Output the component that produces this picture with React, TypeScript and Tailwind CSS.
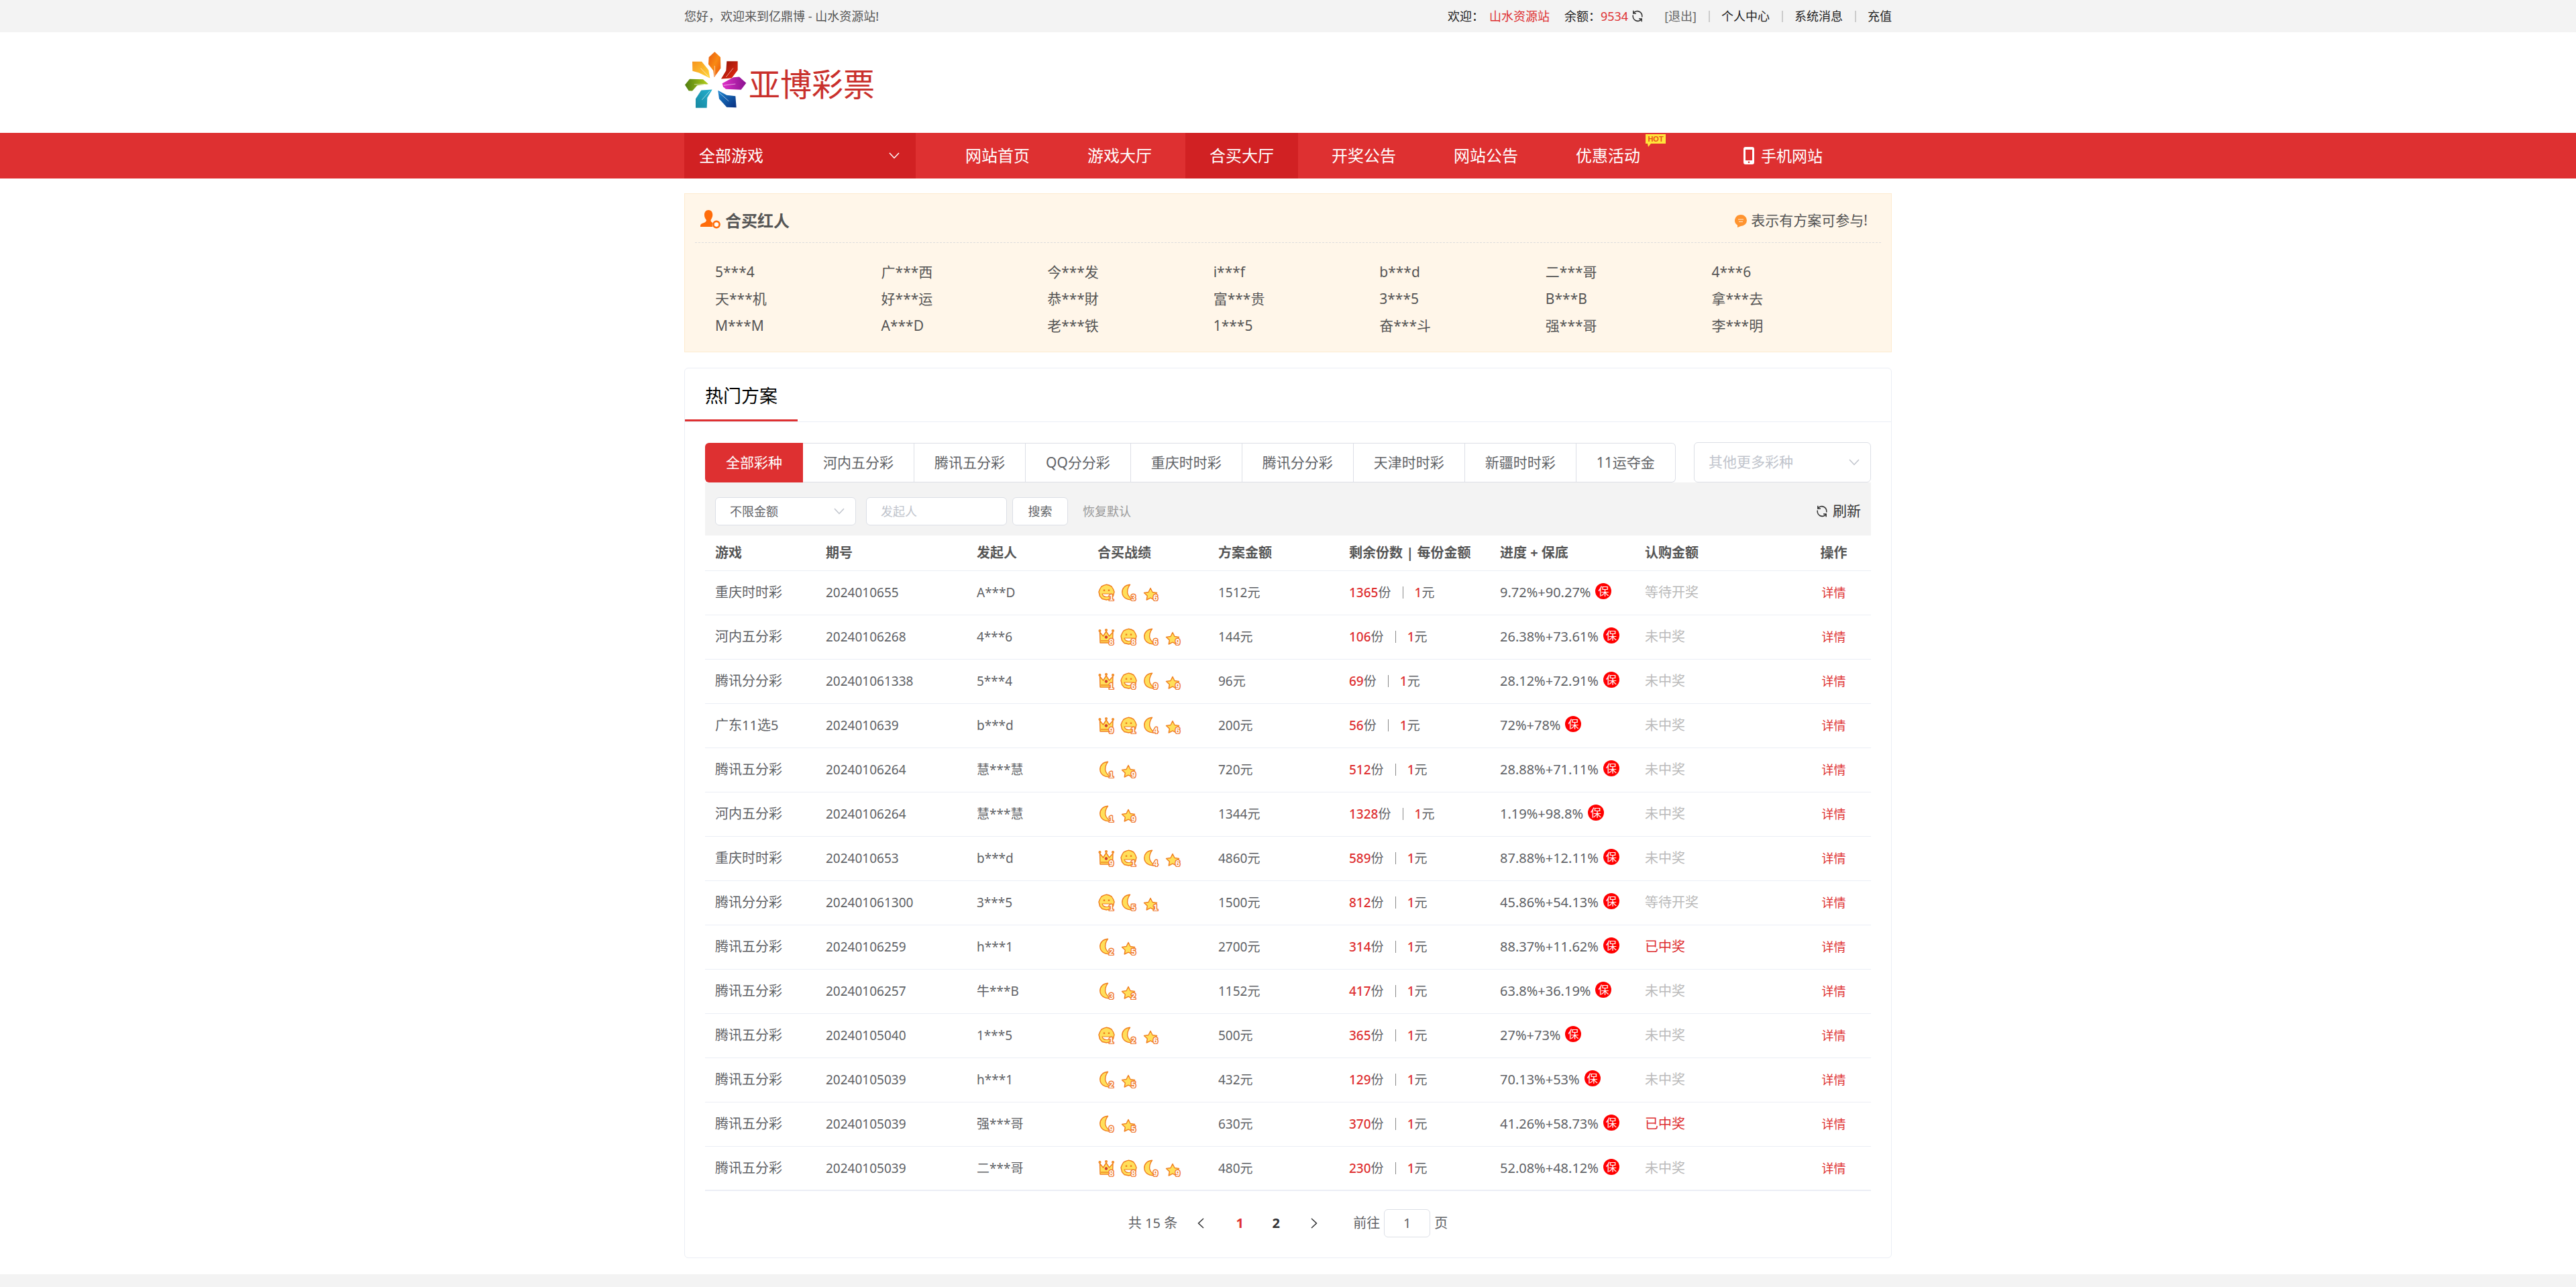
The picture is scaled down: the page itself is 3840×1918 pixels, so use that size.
import type { ReactNode } from 'react';

type MedalKind = 'crown' | 'smile' | 'moon' | 'star';
type Medal = [MedalKind, number];

interface Plan {
  game: string;
  issue: string;
  owner: string;
  medals: Medal[];
  amount: string;
  left: number;
  progress: string;
  status: string;
}

const NAV_ITEMS = ['网站首页', '游戏大厅', '合买大厅', '开奖公告', '网站公告', '优惠活动'];
const ACTIVE_NAV = '合买大厅';
const HOT_NAV = '优惠活动';

const STARS = [
  '5***4', '广***西', '今***发', 'i***f', 'b***d', '二***哥', '4***6',
  '天***机', '好***运', '恭***財', '富***贵', '3***5', 'B***B', '拿***去',
  'M***M', 'A***D', '老***铁', '1***5', '奋***斗', '强***哥', '李***明',
];

const LOTTERIES = [
  '全部彩种', '河内五分彩', '腾讯五分彩', 'QQ分分彩', '重庆时时彩',
  '腾讯分分彩', '天津时时彩', '新疆时时彩', '11运夺金',
];

const PLANS: Plan[] = [
  { game: '重庆时时彩', issue: '2024010655', owner: 'A***D', medals: [['smile', 1], ['moon', 3], ['star', 6]], amount: '1512元', left: 1365, progress: '9.72%+90.27%', status: '等待开奖' },
  { game: '河内五分彩', issue: '20240106268', owner: '4***6', medals: [['crown', 8], ['smile', 8], ['moon', 6], ['star', 9]], amount: '144元', left: 106, progress: '26.38%+73.61%', status: '未中奖' },
  { game: '腾讯分分彩', issue: '202401061338', owner: '5***4', medals: [['crown', 1], ['smile', 6], ['moon', 9], ['star', 9]], amount: '96元', left: 69, progress: '28.12%+72.91%', status: '未中奖' },
  { game: '广东11选5', issue: '2024010639', owner: 'b***d', medals: [['crown', 9], ['smile', 1], ['moon', 4], ['star', 6]], amount: '200元', left: 56, progress: '72%+78%', status: '未中奖' },
  { game: '腾讯五分彩', issue: '20240106264', owner: '慧***慧', medals: [['moon', 1], ['star', 9]], amount: '720元', left: 512, progress: '28.88%+71.11%', status: '未中奖' },
  { game: '河内五分彩', issue: '20240106264', owner: '慧***慧', medals: [['moon', 1], ['star', 9]], amount: '1344元', left: 1328, progress: '1.19%+98.8%', status: '未中奖' },
  { game: '重庆时时彩', issue: '2024010653', owner: 'b***d', medals: [['crown', 9], ['smile', 1], ['moon', 4], ['star', 6]], amount: '4860元', left: 589, progress: '87.88%+12.11%', status: '未中奖' },
  { game: '腾讯分分彩', issue: '202401061300', owner: '3***5', medals: [['smile', 1], ['moon', 5], ['star', 1]], amount: '1500元', left: 812, progress: '45.86%+54.13%', status: '等待开奖' },
  { game: '腾讯五分彩', issue: '20240106259', owner: 'h***1', medals: [['moon', 2], ['star', 5]], amount: '2700元', left: 314, progress: '88.37%+11.62%', status: '已中奖' },
  { game: '腾讯五分彩', issue: '20240106257', owner: '牛***B', medals: [['moon', 3], ['star', 2]], amount: '1152元', left: 417, progress: '63.8%+36.19%', status: '未中奖' },
  { game: '腾讯五分彩', issue: '20240105040', owner: '1***5', medals: [['smile', 1], ['moon', 2], ['star', 6]], amount: '500元', left: 365, progress: '27%+73%', status: '未中奖' },
  { game: '腾讯五分彩', issue: '20240105039', owner: 'h***1', medals: [['moon', 2], ['star', 5]], amount: '432元', left: 129, progress: '70.13%+53%', status: '未中奖' },
  { game: '腾讯五分彩', issue: '20240105039', owner: '强***哥', medals: [['moon', 9], ['star', 5]], amount: '630元', left: 370, progress: '41.26%+58.73%', status: '已中奖' },
  { game: '腾讯五分彩', issue: '20240105039', owner: '二***哥', medals: [['crown', 8], ['smile', 8], ['moon', 9], ['star', 9]], amount: '480元', left: 230, progress: '52.08%+48.12%', status: '未中奖' },
];

function Chevron({ className = '' }: { className?: string }) {
  return (
    <svg viewBox="0 0 16 10" className={`h-[10px] w-4 ${className}`} fill="none" stroke="currentColor" strokeWidth="1.5">
      <path d="M1 1 L8 8.5 L15 1" />
    </svg>
  );
}

function RefreshIcon() {
  return (
    <svg viewBox="0 0 16 18" className="h-[18px] w-4" fill="none" stroke="currentColor" strokeWidth="1.5">
      <path d="M1.8 0.8 V5 H6 M1.8 5 C4 1.6 8 0.8 11 2.5 C14 4.2 15.2 7 14.7 10.5" />
      <path d="M14.2 17.2 V13 H10 M14.2 13 C12 16.4 8 17.2 5 15.5 C2 13.8 0.8 11 1.3 7.5" />
    </svg>
  );
}

function Logo() {
  return (
    <svg viewBox="18 45 282 260" className="h-[87px] w-[94px]">
      <defs>
        <linearGradient id="petal-orange" x1="0" y1="0" x2="1" y2="1">
          <stop offset="0" stopColor="#e8590c" />
          <stop offset="0.5" stopColor="#f98a14" />
          <stop offset="1" stopColor="#e8500a" />
        </linearGradient>
        <linearGradient id="petal-red" x1="0" y1="0" x2="1" y2="1">
          <stop offset="0" stopColor="#8c1208" />
          <stop offset="1" stopColor="#ee2a12" />
        </linearGradient>
        <linearGradient id="petal-yellow" x1="0" y1="0" x2="1" y2="1">
          <stop offset="0" stopColor="#f7941d" />
          <stop offset="1" stopColor="#ffd83a" />
        </linearGradient>
        <linearGradient id="petal-green" x1="0" y1="0" x2="1" y2="0">
          <stop offset="0" stopColor="#4f7d10" />
          <stop offset="1" stopColor="#b4cf1c" />
        </linearGradient>
        <linearGradient id="petal-purple" x1="0" y1="0" x2="1" y2="0">
          <stop offset="0" stopColor="#e030c8" />
          <stop offset="1" stopColor="#8a1290" />
        </linearGradient>
        <linearGradient id="petal-teal" x1="0" y1="1" x2="1" y2="0">
          <stop offset="0" stopColor="#1888a0" />
          <stop offset="1" stopColor="#22b0d0" />
        </linearGradient>
        <linearGradient id="petal-blue" x1="0" y1="0" x2="1" y2="1">
          <stop offset="0" stopColor="#1a86d0" />
          <stop offset="1" stopColor="#0a2f80" />
        </linearGradient>
      </defs>
      <path d="M154 48 L180 72 L181 122 L152 162 L148 132 L126 104 L128 72 Z" fill="url(#petal-orange)" />
      <path d="M208 90 L257 90 L257 130 L230 166 L183 169 L205 132 Z" fill="url(#petal-red)" />
      <path d="M54 92 L96 92 L127 130 L133 166 L84 142 L55 134 Z" fill="url(#petal-yellow)" />
      <path d="M21 196 L42 170 L102 171 L126 192 L76 198 L54 223 L38 222 Z" fill="url(#petal-green)" />
      <path d="M188 189 L238 162 L264 160 L295 188 L272 218 L204 215 L192 204 Z" fill="url(#petal-purple)" />
      <path d="M69 258 L94 220 L143 217 L121 254 L119 299 L69 299 Z" fill="url(#petal-teal)" />
      <path d="M169 221 L208 242 L247 246 L251 297 L208 296 L174 258 Z" fill="url(#petal-blue)" />
      <g fill="none" stroke="#fff" strokeWidth="3" strokeLinecap="round" opacity="0.6">
        <path d="M155 155 L154 112" />
        <path d="M206 160 L236 122" />
        <path d="M126 158 L92 122" />
        <path d="M112 193 L64 194" />
        <path d="M196 198 L246 192" />
        <path d="M132 224 L98 262" />
        <path d="M176 232 L216 268" />
      </g>
    </svg>
  );
}

function MedalIcon({ kind, count }: { kind: MedalKind; count: number }) {
  return (
    <svg viewBox="0 0 26 26" className="h-[26px] w-[26px]">
      <g fill="#ffdf5a" stroke="#f07f1e" strokeWidth="1.4" strokeLinejoin="round">
        {kind === 'crown' && (
          <>
            <path d="M3 22 L2.5 6 L7.5 12 L12 5 L16.5 12 L22 6 L21.5 22 Z" />
            <circle cx="2.5" cy="4" r="1.3" />
            <circle cx="12" cy="3" r="1.3" />
            <circle cx="22" cy="4" r="1.3" />
            <path d="M4 19 H21" />
            <circle cx="12" cy="13.5" r="1.8" fill="#e0382c" stroke="#c9402c" strokeWidth="1" />
          </>
        )}
        {kind === 'smile' && (
          <>
            <path d="M12.5 1.2 L16 2 L20 4 L22.5 8 L24 12 L22.5 18 L19 22.5 L12.5 24 L6 22.5 L2.5 18.5 L1 12 L2.8 7.5 L5 4 L9 2.2 Z" />
            <path d="M9 8.5 V11 M16 8.5 V11" strokeWidth="2.4" />
            <path d="M6 15 H18 C17.5 21 7.5 21 6 15 Z" fill="#fff" strokeWidth="1.2" />
          </>
        )}
        {kind === 'moon' && (
          <path d="M14.5 1.2 C6.5 2 2.5 7 2.8 13 C3.2 20 9.5 25 18.5 23.5 C12 20 9.5 14 11 8.5 C11.8 5 13 3 14.5 1.2 Z" />
        )}
        {kind === 'star' && (
          <path d="M12 6.5 L15 12.5 L21.5 13.4 L16.8 18 L18 24 L12 21.2 L6.2 24 L7.3 18 L2.5 13.4 L9 12.5 Z" />
        )}
      </g>
      <text
        x="19.5"
        y="24.5"
        fontSize="12"
        fontWeight="700"
        fontFamily="Liberation Sans, sans-serif"
        textAnchor="middle"
        fill="#fff"
        stroke="#f07a30"
        strokeWidth="3"
        strokeLinejoin="round"
        paintOrder="stroke"
      >
        {count}
      </text>
    </svg>
  );
}

function TopBar() {
  return (
    <div className="bg-[#f3f3f3] text-lg leading-[48px] text-[#222]">
      <div className="mx-auto flex h-12 max-w-[1800px] items-center justify-between">
        <p className="text-[#555]">您好，欢迎来到亿鼎博 - 山水资源站!</p>
        <div className="flex items-center">
          <span>欢迎：</span>
          <span className="ml-2 text-[#de3031]">山水资源站</span>
          <span className="ml-[22px]">余额：</span>
          <span className="text-[#de3031]">9534</span>
          <button type="button" aria-label="刷新余额" className="ml-[6px] text-[#333]">
            <RefreshIcon />
          </button>
          <a href="#logout" className="ml-8 text-[#666]">[退出]</a>
          {['个人中心', '系统消息', '充值'].map((label) => (
            <span key={label} className="flex items-center">
              <i className="mr-[17px] ml-[18px] h-[17px] w-[2px] bg-[#ccc]" />
              <a href={`#${label}`}>{label}</a>
            </span>
          ))}
        </div>
      </div>
    </div>
  );
}

function NavBar() {
  return (
    <nav className="bg-[#de3031] text-2xl leading-[68px] text-white">
      <div className="mx-auto flex h-[68px] max-w-[1800px]">
        <button type="button" className="flex w-[345px] items-center justify-between bg-[#d12123] pr-6 pl-[22px]">
          全部游戏
          <Chevron />
        </button>
        <ul className="ml-[38px] flex gap-[14px]">
          {NAV_ITEMS.map((item) => (
            <li key={item} className="relative">
              <a href={`#${item}`} className={`block px-9 ${item === ACTIVE_NAV ? 'bg-[#d12123]' : ''}`}>
                {item}
              </a>
              {item === HOT_NAV && (
                <svg viewBox="0 0 30 19" className="absolute top-[2px] left-[140px] h-[19px] w-[30px]">
                  <path d="M0 0 H30 V14 H8 L4 19 L3 14 H0 Z" fill="#ffe53b" />
                  <text x="15" y="11" fontSize="11" fontWeight="700" fontFamily="Liberation Sans, sans-serif" textAnchor="middle" fill="#ea4f1a">
                    HOT
                  </text>
                </svg>
              )}
            </li>
          ))}
        </ul>
        <a href="#mobile" className="ml-[118px] flex items-center gap-[10px] text-[23px]">
          <svg viewBox="0 0 16 26" className="h-[26px] w-4">
            <path fillRule="evenodd" d="M3 0 H13 Q16 0 16 3 V23 Q16 26 13 26 H3 Q0 26 0 23 V3 Q0 0 3 0 Z M3 4 V20 H13 V4 Z M8 21.5 A1.3 1.3 0 1 0 8 24.1 A1.3 1.3 0 1 0 8 21.5 Z" fill="#fff" />
          </svg>
          手机网站
        </a>
      </div>
    </nav>
  );
}

function StarPanel() {
  return (
    <section className="mt-[22px] border border-[#fdebd0] bg-[#fff6e9] px-[15px] pb-[19px] text-[#555]">
      <header className="flex h-[73px] items-center justify-between border-b border-dashed border-[#ddd] pt-2 pr-5 pl-2">
        <h2 className="flex items-center gap-[7px] text-2xl font-bold">
          <svg viewBox="0 0 30 28" className="mb-1 h-7 w-[30px]">
            <path d="M12 0 C16 0 18.5 3 18.3 7.5 C18.2 11 16.5 13 15.5 15 C15.5 17.5 16.5 18 18.5 19 C17.5 21 17.5 23 18.5 25 H0 C0 21.5 1 20.5 4 19.5 C7 18.5 9 17.5 9 15 C7.5 13 6 11 6 7.5 C5.8 3 8.5 0 12 0 Z" fill="#ff6c0a" />
            <circle cx="24" cy="21.5" r="4.6" fill="#fff6e9" stroke="#ff6c0a" strokeWidth="2.6" />
            <path d="M24 18.5 C26 20.5 26.5 24 24 24.5 C21.5 24 22 20.5 24 18.5 Z" fill="#fff" />
          </svg>
          合买红人
        </h2>
        <p className="flex items-center gap-[6px] text-[21px]">
          <svg viewBox="0 0 18 20" className="h-5 w-[18px]">
            <path d="M9 1 A9 8.5 0 0 1 9 18 L4 20 V16.500 A9 8.5 0 0 1 9 1 Z" fill="#ff9430" />
            <path d="M5 8 H13 M6 11.5 H12" stroke="#fff" strokeWidth="1.2" opacity="0.8" />
          </svg>
          表示有方案可参与!
        </p>
      </header>
      <ul className="grid grid-cols-7 pt-[23px] pr-[5px] pl-[30px] text-[21px] leading-10">
        {STARS.map((name) => (
          <li key={name}>{name}</li>
        ))}
      </ul>
    </section>
  );
}

function Picker({ label, options, className, size }: { label: string; options: string[]; className: string; size: string }) {
  return (
    <label className={`relative block ${size}`}>
      <select aria-label={label} className={`h-full w-full appearance-none rounded-md border border-[#dcdfe6] bg-white pl-[21px] outline-none ${className}`}>
        {options.map((option) => (
          <option key={option}>{option}</option>
        ))}
      </select>
      <Chevron className="pointer-events-none absolute top-1/2 right-[17px] -translate-y-1/2 text-[#c0c4cc]" />
    </label>
  );
}

function Filters() {
  return (
    <>
      <div className="flex items-end justify-between">
        <div className="flex h-[59px] text-[21px] text-[#606266]">
          {LOTTERIES.map((name, index) => (
            <button
              key={name}
              type="button"
              className={
                index === 0
                  ? 'rounded-l-md bg-[#de3031] px-[31px] text-white'
                  : 'border-y border-r border-[#dcdfe6] bg-white px-[30px] last:rounded-r-md'
              }
            >
              {name}
            </button>
          ))}
        </div>
        <Picker label="其他更多彩种" options={['其他更多彩种']} size="h-[60px] w-[264px]" className="text-[21px] text-[#c0c4cc]" />
      </div>
      <div className="flex h-[79px] items-center bg-[#f3f3f3] px-[15px] pt-[6px] text-lg">
        <Picker label="方案金额" options={['不限金额']} size="h-[42px] w-[210px]" className="text-lg text-[#606266]" />
        <input
          aria-label="发起人"
          placeholder="发起人"
          className="ml-[15px] h-[42px] w-[210px] rounded-md border border-[#dcdfe6] bg-white px-[21px] outline-none placeholder:text-[#c0c4cc]"
        />
        <button type="button" className="ml-2 h-[42px] w-[83px] rounded-md border border-[#dcdfe6] bg-white text-[#606266]">
          搜索
        </button>
        <button type="button" className="ml-[22px] text-[#999]">恢复默认</button>
        <button type="button" className="ml-auto flex items-center gap-2 text-[21px] text-[#333]">
          <RefreshIcon />
          刷新
        </button>
      </div>
    </>
  );
}

function Cell({ children, className = '' }: { children: ReactNode; className?: string }) {
  return <td className={`px-[15px] ${className}`}>{children}</td>;
}

function PlanTable() {
  return (
    <table className="w-full table-fixed border-b-2 border-[#ebeef5] text-left whitespace-nowrap text-[#606266]">
      <colgroup>
        <col className="w-[165px]" />
        <col className="w-[225px]" />
        <col className="w-[180px]" />
        <col className="w-[180px]" />
        <col className="w-[195px]" />
        <col className="w-[225px]" />
        <col className="w-[216px]" />
        <col />
        <col className="w-[111px]" />
      </colgroup>
      <thead className="text-[20px] text-[#555]">
        <tr className="h-[52px] border-b border-[#ebeef5]">
          {['游戏', '期号', '发起人', '合买战绩', '方案金额', '剩余份数 | 每份金额', '进度 + 保底', '认购金额'].map((title) => (
            <th key={title} className="px-[15px] font-bold">{title}</th>
          ))}
          <th className="text-center font-bold">操作</th>
        </tr>
      </thead>
      <tbody className="text-[19px]">
        {PLANS.map((plan, index) => (
          <tr key={index} className="h-[66px] border-b border-[#ebeef5]">
            <Cell className="text-[20px]">{plan.game}</Cell>
            <Cell>{plan.issue}</Cell>
            <Cell>{plan.owner}</Cell>
            <Cell>
              <div className="flex gap-[7px] pl-px">
                {plan.medals.map(([kind, count]) => (
                  <MedalIcon key={kind} kind={kind} count={count} />
                ))}
              </div>
            </Cell>
            <Cell>{plan.amount}</Cell>
            <Cell>
              <div className="flex items-center">
                <b className="font-medium text-[#de3031]">{plan.left}</b>份
                <i className="mx-[17px] h-[18px] w-px bg-[#888]" />
                <b className="font-medium text-[#de3031]">1</b>元
              </div>
            </Cell>
            <Cell>
              <div className="flex items-center gap-[7px]">
                <span className="text-[20px]">{plan.progress}</span>
                <span className="mb-1 h-6 w-6 rounded-full bg-[#f00] text-center text-base leading-6 text-white">保</span>
              </div>
            </Cell>
            <Cell className={plan.status === '已中奖' ? 'text-[20px] text-[#de3031]' : 'text-[20px] text-[#bbb]'}>{plan.status}</Cell>
            <td className="text-center text-lg">
              <a href={`#plan-${index}`} className="text-[#de3031]">详情</a>
            </td>
          </tr>
        ))}
      </tbody>
    </table>
  );
}

function Pagination() {
  return (
    <div className="flex h-[99px] items-center justify-center pb-1 text-[20px] text-[#606266]">
      <span>共 15 条</span>
      <button type="button" aria-label="上一页" className="ml-[27px] w-5 text-[#303133]">
        <Chevron className="rotate-90" />
      </button>
      <button type="button" className="ml-[19px] w-[54px] font-bold text-[#de3031]">1</button>
      <button type="button" className="w-[54px] font-bold text-[#303133]">2</button>
      <button type="button" aria-label="下一页" className="ml-[22px] w-5 text-[#303133]">
        <Chevron className="-rotate-90" />
      </button>
      <label className="ml-[46px] flex items-center gap-[6px]">
        前往
        <input defaultValue="1" aria-label="页码" className="h-[42px] w-[69px] rounded-md border border-[#dcdfe6] text-center outline-none" />
        页
      </label>
    </div>
  );
}

export default function App() {
  return (
    <div className="min-h-screen bg-white font-['Noto_Sans','Noto_Sans_CJK_SC',sans-serif]">
      <TopBar />
      <header className="mx-auto flex h-[150px] max-w-[1800px] items-center gap-[2px] pb-2">
        <Logo />
        <h1 className="pt-3 text-[47px] leading-none text-[#c9302c]">亚博彩票</h1>
      </header>
      <NavBar />
      <main className="mx-auto max-w-[1800px]">
        <StarPanel />
        <section className="mt-[23px] rounded-md border border-[#ebeef5]">
          <div className="flex border-b border-[#ebeef5]">
            <h2 className="w-[168px] border-b-[3px] border-[#de3031] pt-[6px] pl-[30px] text-[27px] leading-[70px] text-black">热门方案</h2>
          </div>
          <div className="px-[30px] pt-[30px]">
            <Filters />
            <PlanTable />
            <Pagination />
          </div>
        </section>
      </main>
      <footer className="mt-6 h-5 bg-[#f3f3f3]" />
    </div>
  );
}
